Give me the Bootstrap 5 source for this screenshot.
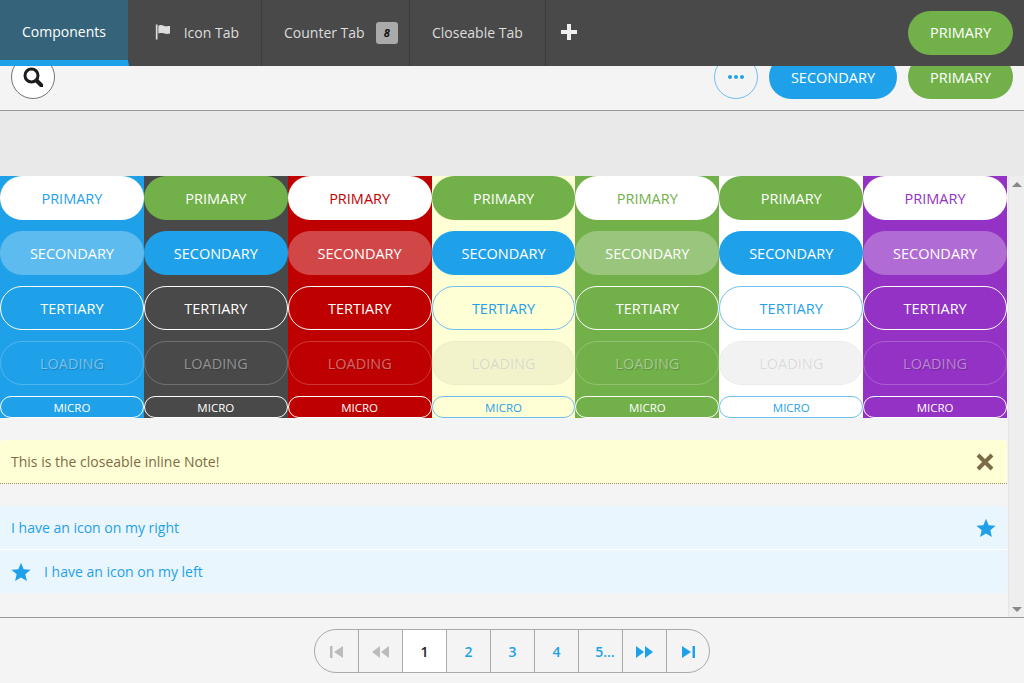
<!DOCTYPE html>
<html lang="en">
<head>
  <meta charset="UTF-8">
  <meta name="viewport" content="width=device-width, initial-scale=1.0">
  <title>Components</title>
  <link href="https://cdn.jsdelivr.net/npm/bootstrap@5.3.0/dist/css/bootstrap.min.css" rel="stylesheet">
  <style>
    html, body { height: 100%; }
    body { font-family: "Open Sans", "Liberation Sans", sans-serif; font-size: 14px; background: #f4f4f4; overflow: hidden; }

    /* top tab bar */
    .tabbar { height: 66px; background: #494949; position: relative; z-index: 2; }
    .tabitem { height: 66px; padding: 0 22px 2px; color: #ddd; border-right: 1px solid #3c3c3c; white-space: nowrap; text-decoration: none; }
    .tabitem.on { width: 129px; background: #35647a; color: #fff; border-bottom: 6px solid #1fa1ea; border-right-color: #494949; padding: 2px 0 0; }
    .tabicon { width: 133px; padding-left: 26px; }
    .tabcount { width: 148px; }
    .tabclose { width: 136px; }
    .tabplus { padding: 0 15px 3px; border-right: 0; }
    .counter { flex: none; width: 22px; height: 22px; background: #aaa; border-radius: 3px; color: #111; font-weight: 700; font-style: italic; font-size: 11px; margin-left: 11px; margin-top: 2px; }
    .tabaction { padding-right: 11px; }
    .tabaction .pill { padding-top: 0; }

    /* pills */
    .pill { height: 44px; line-height: 40px; padding: 2px 21px 0; border-radius: 22px; border: 1px solid transparent; font-size: 14.5px; text-transform: uppercase; text-align: center; display: block; white-space: nowrap; }
    .pill.microbtn { height: 22px; line-height: 19px; padding-top: 1px; font-size: 11.5px; border-radius: 11px; }
    .p-green { background: #72b04a; color: #fff; }
    .p-blue { background: #1fa1ea; color: #fff; }
    .p-round { width: 44px; padding: 0; display: flex; align-items: center; justify-content: center; border-radius: 50%; }
    .gap-l { margin-left: 11px; }

    /* toolbar under the tabs */
    .toolbar { height: 45px; border-bottom: 1px solid #999; background: #f4f4f4; padding: 0 11px; overflow: hidden; flex: none; }
    .toolbar .pill { margin-top: -11px; }
    .band { height: 65px; background: #e9e9e9; flex: none; }

    /* scrolling part */
    .scrollarea { height: 441px; }
    .maincol { width: 1007px; }
    .swatchrow { height: 242px; }
    .swatch { flex: 1 1 0; display: flex; flex-direction: column; gap: 11px; min-width: 0; }
    .swatch .pill { padding-left: 0; padding-right: 0; }

    .s-blue { background: #1fa1ea; }
    .s-dark { background: #494949; }
    .s-red { background: #bf0000; }
    .s-yellow { background: #ffffd6; }
    .s-green { background: #72b04a; }
    .s-white { background: #fff; }
    .s-purple { background: #9332c4; }

    .p-white { background: #fff; }
    .c-blue { color: #1fa1ea; }
    .c-red { color: #bf0000; }
    .c-green { color: #72b04a; }
    .c-purple { color: #9332c4; }
    .p-soft { background: rgba(255, 255, 255, .28); color: #fff; }
    .p-line { border-color: #fff; color: #fff; }
    .p-line-blue { border-color: #6fc0ee; color: #1fa1ea; }
    .p-load { border-color: rgba(255, 255, 255, .22); color: rgba(255, 255, 255, .42); text-shadow: 1px 1px 1px rgba(0, 0, 0, .2); }
    .p-load-light { background: rgba(0, 0, 0, .05); border-color: rgba(0, 0, 0, .03); color: rgba(0, 0, 0, .14); text-shadow: 0 0 1px rgba(255, 255, 255, .6); line-height: 38px; }

    .note { height: 44px; margin-top: 22px; padding: 0 11px; background: #ffffd6; color: #7d6b45; border-bottom: 1px dotted #a08f66; border-radius: 4px 4px 0 0; }
    .infolist { margin-top: 22px; background: #eaf6fd; border-radius: 4px; color: #1fa1ea; }
    .inforow { height: 43px; padding: 0 11px; }
    .inforow + .inforow { border-top: 1px solid #fff; height: 44px; }
    .rowstar { margin-right: 13px; }
    .closeicon { margin-right: 2px; }
    .fakescroll { width: 16px; margin-left: 1px; background: #eee; border-left: 1px solid #e4e4e4; padding: 6px 0 5px; }
    .arrow-up { border: 5px solid transparent; border-top: 0; border-bottom: 5px solid #888; }
    .arrow-down { border: 5px solid transparent; border-bottom: 0; border-top: 5px solid #888; }

    /* pager */
    .footbar { height: 66px; border-top: 1px solid #999; background: #f4f4f4; flex: none; }
    .pager-wrap { --bs-pagination-padding-x: 0; --bs-pagination-padding-y: 0; --bs-pagination-font-size: 14px; --bs-pagination-color: #1fa1ea; --bs-pagination-bg: transparent; --bs-pagination-border-color: #aaa; --bs-pagination-border-radius: 22px; --bs-pagination-active-bg: #fff; --bs-pagination-active-color: #222; --bs-pagination-active-border-color: #aaa; --bs-pagination-disabled-bg: transparent; --bs-pagination-disabled-border-color: #aaa; --bs-pagination-disabled-color: #bbb; }
    .pager-wrap .page-link { width: 45px; height: 44px; padding-top: 2px; display: flex; align-items: center; justify-content: center; font-weight: 600; }
    .pager-wrap .page-item:not(:first-child) .page-link { margin-left: -1px; }
    .pager-wrap .page-item:last-child .page-link { width: 44px; }
    .pager-wrap .page-link.pagemore { padding-left: 9px; }
  </style>
</head>
<body>
  <div class="d-flex flex-column vh-100">

    <!-- tabs -->
    <div class="tabbar d-flex align-items-stretch">
      <a class="tabitem on d-flex align-items-center justify-content-center" href="#">Components</a>
      <a class="tabitem tabicon d-flex align-items-center" href="#">
        <svg class="me-2" width="20" height="20" viewBox="0 0 20 20" fill="#ddd"><rect x="1" y="1" width="2" height="18"/><path d="M4 2.500c2.500-1.300 4.500-.8 6.500 0s3.500.8 5.500.2l2 .1v9c-2.500.8-5 .7-7 0s-4.500-.7-7 0z"/></svg>
        <span class="ms-1">Icon Tab</span>
      </a>
      <a class="tabitem tabcount d-flex align-items-center" href="#">
        Counter Tab
        <span class="counter d-flex align-items-center justify-content-center">8</span>
      </a>
      <a class="tabitem tabclose d-flex align-items-center" href="#">Closeable Tab</a>
      <a class="tabitem tabplus d-flex align-items-center" href="#" aria-label="Add tab">
        <svg width="16" height="16" viewBox="0 0 16 16" fill="#eee"><rect x="6" y="0" width="4" height="16"/><rect x="0" y="6" width="16" height="4"/></svg>
      </a>
      <div class="tabaction ms-auto d-flex align-items-center">
        <button class="btn pill p-green" type="button">Primary</button>
      </div>
    </div>

    <!-- toolbar -->
    <div class="toolbar d-flex align-items-start">
      <button class="btn pill p-round bg-white border-secondary" type="button" aria-label="Search">
        <svg width="20" height="20" viewBox="0 0 20 20" fill="none" stroke="#1c1c1c"><circle cx="8.500" cy="8.500" r="6.500" stroke-width="3"/><path d="M13.500 13.500l5 5" stroke-width="4" stroke-linecap="round"/></svg>
      </button>
      <button class="btn pill p-round ms-auto p-line-blue" type="button" aria-label="More">
        <svg width="16" height="4" viewBox="0 0 16 4" fill="#1fa1ea"><circle cx="2" cy="2" r="2"/><circle cx="8" cy="2" r="2"/><circle cx="14" cy="2" r="2"/></svg>
      </button>
      <button class="btn pill p-blue gap-l" type="button">Secondary</button>
      <button class="btn pill p-green gap-l" type="button">Primary</button>
    </div>

    <div class="band"></div>

    <!-- scrolling part -->
    <div class="scrollarea d-flex">
      <div class="maincol">
        <div class="swatchrow d-flex">
          <div class="swatch s-blue">
            <button class="btn pill p-white c-blue" type="button">Primary</button>
            <button class="btn pill p-soft" type="button">Secondary</button>
            <button class="btn pill p-line" type="button">Tertiary</button>
            <button class="btn pill p-load" type="button">Loading</button>
            <button class="btn pill microbtn p-line" type="button">Micro</button>
          </div>
          <div class="swatch s-dark">
            <button class="btn pill p-green" type="button">Primary</button>
            <button class="btn pill p-blue" type="button">Secondary</button>
            <button class="btn pill p-line" type="button">Tertiary</button>
            <button class="btn pill p-load" type="button">Loading</button>
            <button class="btn pill microbtn p-line" type="button">Micro</button>
          </div>
          <div class="swatch s-red">
            <button class="btn pill p-white c-red" type="button">Primary</button>
            <button class="btn pill p-soft" type="button">Secondary</button>
            <button class="btn pill p-line" type="button">Tertiary</button>
            <button class="btn pill p-load" type="button">Loading</button>
            <button class="btn pill microbtn p-line" type="button">Micro</button>
          </div>
          <div class="swatch s-yellow">
            <button class="btn pill p-green" type="button">Primary</button>
            <button class="btn pill p-blue" type="button">Secondary</button>
            <button class="btn pill p-line-blue" type="button">Tertiary</button>
            <button class="btn pill p-load-light" type="button">Loading</button>
            <button class="btn pill microbtn p-line-blue" type="button">Micro</button>
          </div>
          <div class="swatch s-green">
            <button class="btn pill p-white c-green" type="button">Primary</button>
            <button class="btn pill p-soft" type="button">Secondary</button>
            <button class="btn pill p-line" type="button">Tertiary</button>
            <button class="btn pill p-load" type="button">Loading</button>
            <button class="btn pill microbtn p-line" type="button">Micro</button>
          </div>
          <div class="swatch s-white">
            <button class="btn pill p-green" type="button">Primary</button>
            <button class="btn pill p-blue" type="button">Secondary</button>
            <button class="btn pill p-line-blue" type="button">Tertiary</button>
            <button class="btn pill p-load-light" type="button">Loading</button>
            <button class="btn pill microbtn p-line-blue" type="button">Micro</button>
          </div>
          <div class="swatch s-purple">
            <button class="btn pill p-white c-purple" type="button">Primary</button>
            <button class="btn pill p-soft" type="button">Secondary</button>
            <button class="btn pill p-line" type="button">Tertiary</button>
            <button class="btn pill p-load" type="button">Loading</button>
            <button class="btn pill microbtn p-line" type="button">Micro</button>
          </div>
        </div>

        <div class="note d-flex align-items-center justify-content-between">
          <span>This is the closeable inline Note!</span>
          <svg class="closeicon" width="18" height="18" viewBox="0 0 18 18" stroke="#7d6b45" stroke-width="4"><path d="M2 2l14 14M16 2L2 16"/></svg>
        </div>

        <div class="infolist">
          <div class="inforow d-flex align-items-center justify-content-between">
            <span>I have an icon on my right</span>
            <svg width="20" height="20" viewBox="0 0 24 24" fill="#1fa1ea"><path d="M12 1l3.200 7.700 8.300.7-6.300 5.400 1.900 8.100L12 18.600l-7.100 4.300 1.900-8.100L.5 9.400l8.300-.7z"/></svg>
          </div>
          <div class="inforow d-flex align-items-center">
            <svg class="rowstar" width="20" height="20" viewBox="0 0 24 24" fill="#1fa1ea"><path d="M12 1l3.200 7.700 8.300.7-6.300 5.400 1.900 8.100L12 18.600l-7.100 4.300 1.900-8.100L.5 9.400l8.300-.7z"/></svg>
            <span>I have an icon on my left</span>
          </div>
        </div>
      </div>

      <div class="fakescroll d-flex flex-column align-items-center justify-content-between">
        <div class="arrow-up"></div>
        <div class="arrow-down"></div>
      </div>
    </div>

    <!-- pager -->
    <div class="footbar d-flex justify-content-center align-items-center">
      <ul class="pagination pager-wrap mb-0">
        <li class="page-item disabled"><a class="page-link" href="#" aria-label="First">
          <svg width="13" height="12" viewBox="0 0 13 12" fill="currentColor"><rect width="2.500" height="12"/><path d="M13 0v12L4 6z"/></svg>
        </a></li>
        <li class="page-item disabled"><a class="page-link" href="#" aria-label="Previous">
          <svg width="17" height="12" viewBox="0 0 17 12" fill="currentColor"><path d="M8 0v12L0 6zM17 0v12L9 6z"/></svg>
        </a></li>
        <li class="page-item active"><a class="page-link" href="#">1</a></li>
        <li class="page-item"><a class="page-link" href="#">2</a></li>
        <li class="page-item"><a class="page-link" href="#">3</a></li>
        <li class="page-item"><a class="page-link" href="#">4</a></li>
        <li class="page-item"><a class="page-link pagemore" href="#">5…</a></li>
        <li class="page-item"><a class="page-link" href="#" aria-label="Next">
          <svg width="17" height="12" viewBox="0 0 17 12" fill="currentColor"><path d="M0 0v12l8-6zM9 0v12l8-6z"/></svg>
        </a></li>
        <li class="page-item"><a class="page-link" href="#" aria-label="Last">
          <svg width="13" height="12" viewBox="0 0 13 12" fill="currentColor"><path d="M0 0v12l9-6z"/><rect x="10.500" width="2.500" height="12"/></svg>
        </a></li>
      </ul>
    </div>
  </div>
</body>
</html>
